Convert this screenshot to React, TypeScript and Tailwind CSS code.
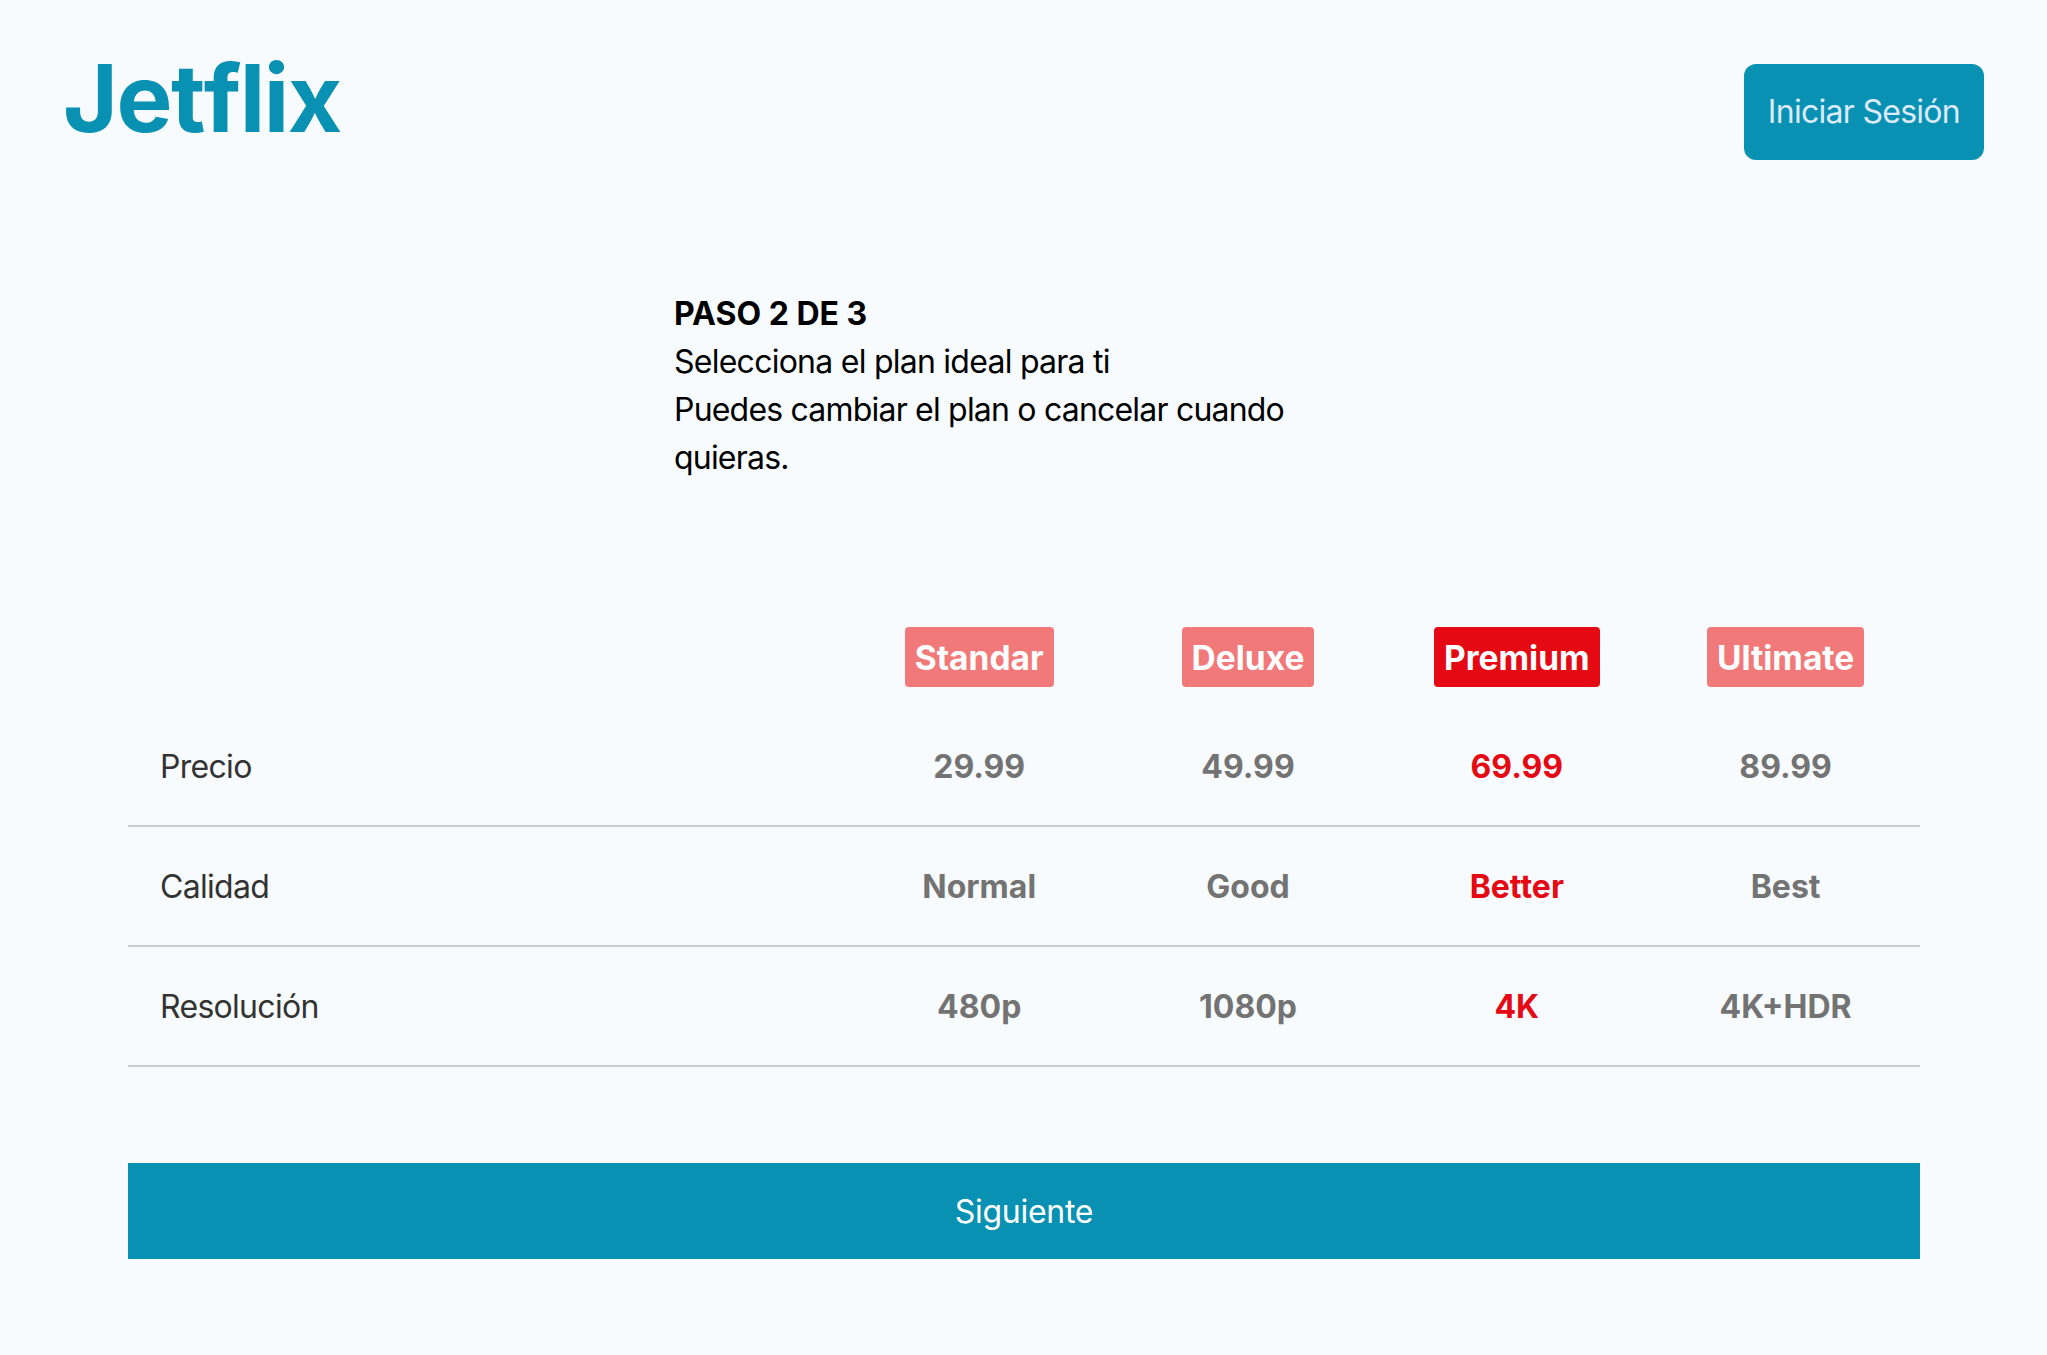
const plans = ['Standar', 'Deluxe', 'Premium', 'Ultimate'];

const rows = [
  { label: 'Precio', values: ['29.99', '49.99', '69.99', '89.99'] },
  { label: 'Calidad', values: ['Normal', 'Good', 'Better', 'Best'] },
  { label: 'Resolución', values: ['480p', '1080p', '4K', '4K+HDR'] },
];

const SELECTED = 2;

export default function App() {
  return (
    <div className="min-h-screen bg-[#f7fbfe] font-['Inter',sans-serif] text-[32px] leading-[48px] text-black">
      <header className="flex items-start justify-between pl-[63px] pr-[63px] pt-[64px]">
        <h1 className="mt-[-24px] text-[94px] leading-[116px] font-bold tracking-[-0.016em] text-[#0891b2] [font-kerning:none] [font-variant-ligatures:none]">
          Jetflix
        </h1>
        <button
          className="rounded-xl bg-[#0891b2] px-6 py-6 font-normal tracking-[-0.72px] text-[#dbeafe]"
          type="button"
        >
          Iniciar Sesión
        </button>
      </header>

      <section className="mx-auto mt-[130px] w-[699px]">
        <p className="font-bold">PASO 2 DE 3</p>
        <p className="w-[640px] tracking-[-0.75px]">
          Selecciona el plan ideal para ti
        </p>
        <p className="w-[640px] tracking-[-0.8px]">
          Puedes cambiar el plan o cancelar cuando quieras.
        </p>
      </section>

      <main className="ml-[128px] mr-[127px] mt-[145px]">
        <div className="grid grid-cols-[40%_15%_15%_15%_15%] pb-[20px]">
          <div />
          {plans.map((plan, index) => (
            <div className="flex justify-center" key={plan}>
              <span
                className={`rounded-[4px] px-[10px] pt-[7px] pb-[5px] text-[33.5px] font-bold text-white ${
                  index === SELECTED ? 'bg-[#e50914]' : 'bg-[#f27979]'
                }`}
              >
                {plan}
              </span>
            </div>
          ))}
        </div>

        {rows.map((row) => (
          <div
            className="grid h-[120px] grid-cols-[40%_15%_15%_15%_15%] items-center border-b-2 border-[#cccccc] pt-[2px]"
            key={row.label}
          >
            <div className="pl-8 tracking-[-0.7px] text-[#333333]">
              {row.label}
            </div>
            {row.values.map((value, index) => (
              <div
                className={`text-center font-bold ${
                  index === SELECTED ? 'text-[#e50914]' : 'text-[#737373]'
                }`}
                key={value}
              >
                {value}
              </div>
            ))}
          </div>
        ))}

        <button
          className="mt-[96px] h-[96px] w-full bg-[#0891b2] pt-[2px] font-normal tracking-[-0.3px] text-white"
          type="button"
        >
          Siguiente
        </button>
      </main>
    </div>
  );
}
